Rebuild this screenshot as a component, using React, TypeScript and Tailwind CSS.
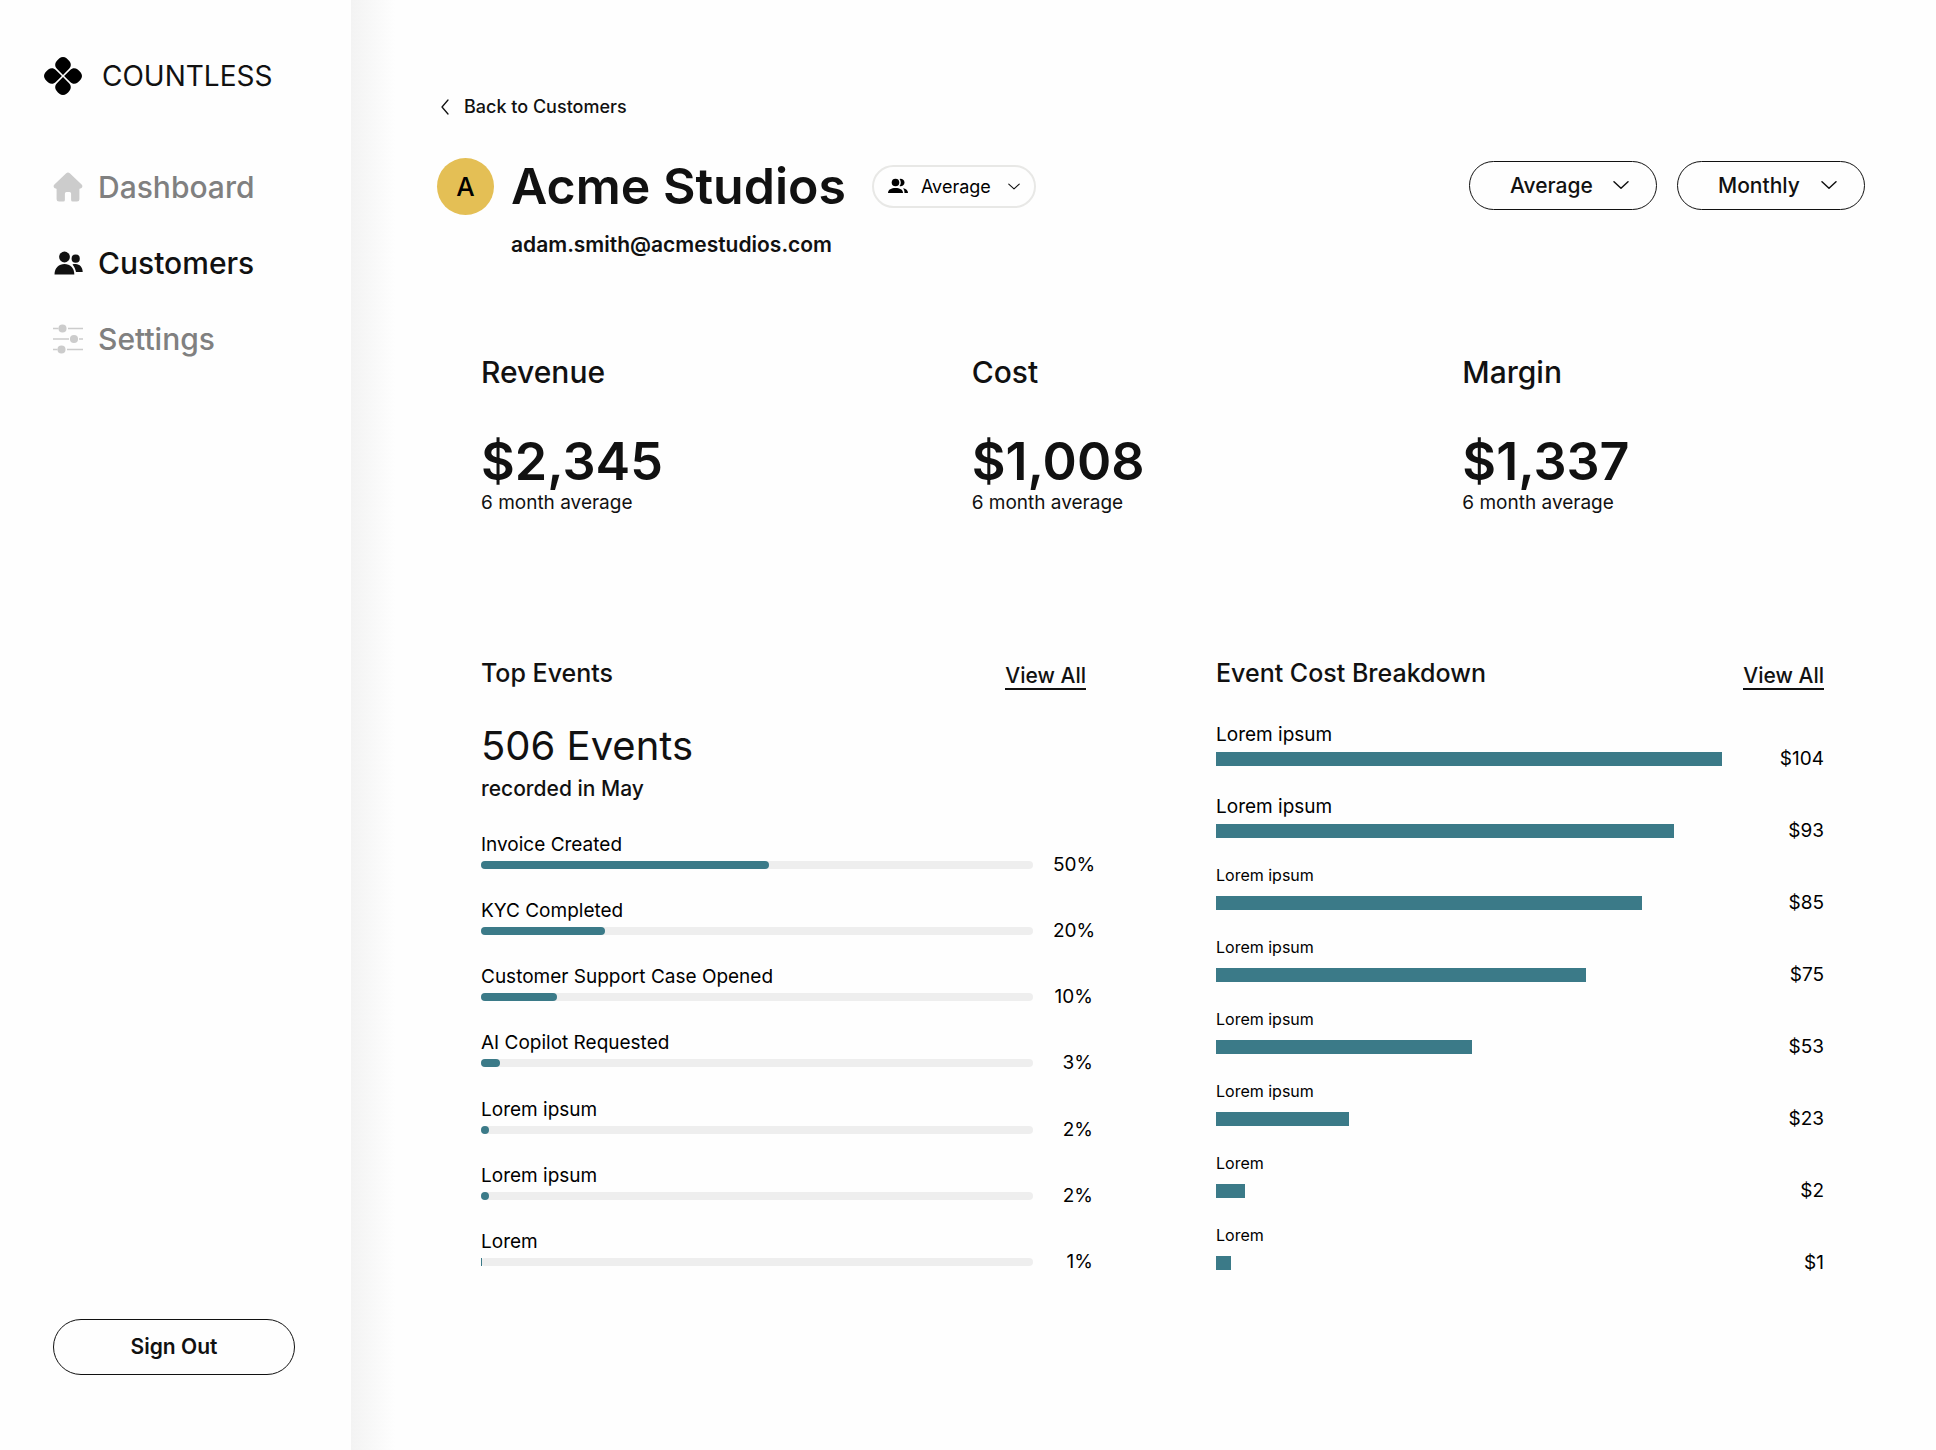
const topEvents = [
  { label: "Invoice Created", percent: 50, fill: 288 },
  { label: "KYC Completed", percent: 20, fill: 124 },
  { label: "Customer Support Case Opened", percent: 10, fill: 76 },
  { label: "AI Copilot Requested", percent: 3, fill: 19 },
  { label: "Lorem ipsum", percent: 2, fill: 8 },
  { label: "Lorem ipsum", percent: 2, fill: 8 },
  { label: "Lorem", percent: 1, fill: 1 },
];
const TRACK = 552;

const costs = [
  { label: "Lorem ipsum", cost: 104, share: 100, large: true },
  { label: "Lorem ipsum", cost: 93, share: 90.6, large: true },
  { label: "Lorem ipsum", cost: 85, share: 84.2, large: false },
  { label: "Lorem ipsum", cost: 75, share: 73.2, large: false },
  { label: "Lorem ipsum", cost: 53, share: 50.6, large: false },
  { label: "Lorem ipsum", cost: 23, share: 26.3, large: false },
  { label: "Lorem", cost: 2, share: 5.7, large: false },
  { label: "Lorem", cost: 1, share: 3, large: false },
];

const stats = [
  { name: "Revenue", value: "$2,345" },
  { name: "Cost", value: "$1,008" },
  { name: "Margin", value: "$1,337" },
];

function Logo() {
  return (
    <svg className="size-[38px]" viewBox="0 0 38 38" fill="#000" aria-hidden="true">
      {[0, 90, 180, 270].map((turn) => (
        <path
          key={turn}
          transform={`rotate(${turn} 19 19)`}
          d="M19 17.900 12.900 11.800C10.600 9.500 10.700 6.600 12.500 4.300 14.300 2 16.400 0 19 0s4.700 2 6.500 4.300C27.300 6.600 27.400 9.500 25.100 11.800z"
        />
      ))}
    </svg>
  );
}

function HomeIcon() {
  return (
    <svg className="size-[30px]" viewBox="0 0 30 30" fill="#cccccc" aria-hidden="true">
      <path d="M13.200 1.300a2.600 2.600 0 0 1 3.600 0L28.600 12.600c1.500 1.500.7 3.700-1.400 3.900-.5 0-.8.300-.8.800V27a2.500 2.500 0 0 1-2.500 2.500h-4.200a1.600 1.600 0 0 1-1.600-1.600v-6.300a1.600 1.600 0 0 0-1.600-1.600h-3a1.600 1.600 0 0 0-1.600 1.600v6.300a1.600 1.600 0 0 1-1.600 1.600H6.100A2.500 2.500 0 0 1 3.600 27v-9.700c0-.5-.3-.8-.8-.8-2.100-.2-2.900-2.400-1.400-3.900z" />
    </svg>
  );
}

function PeopleIcon() {
  return (
    <svg className="size-[30px]" viewBox="0 0 30 30" fill="#111" aria-hidden="true">
      <circle cx="11.500" cy="9" r="5.400" />
      <circle cx="22.700" cy="10.700" r="4.100" />
      <path d="M1.500 26.500C1.500 20 6 16 11.500 16s9.800 4 9.800 10.500z" />
      <path d="M19.500 16.400c1-.4 2.100-.5 3.200-.4 4 .2 7 3.200 7 8h-6.700c-.6-3-1.700-5.500-3.500-7.600z" />
    </svg>
  );
}

function SettingsIcon() {
  return (
    <svg className="size-[30px]" viewBox="0 0 30 30" fill="#cccccc" stroke="#cccccc" strokeWidth="1.500" aria-hidden="true">
      <path d="M0 4.500h5.500M15 4.500h15M0 15h16M26 15h4M0 25.500h4.500M14 25.500h16" />
      <circle cx="9.500" cy="4.500" r="3.300" />
      <circle cx="21" cy="15" r="3.300" />
      <circle cx="8.500" cy="25.500" r="3.300" />
    </svg>
  );
}

function GroupIcon() {
  return (
    <svg className="h-4 w-5" viewBox="0 0 20 16" fill="#000" aria-hidden="true">
      <circle cx="7.500" cy="4.500" r="3.800" />
      <path d="M0 15c0-3.600 3.500-5 7.500-5s7.500 1.400 7.500 5z" />
      <path d="M11.500.9a3.800 3.800 0 1 1 0 7.200c1.700-2 1.700-5.200 0-7.200z" />
      <path d="M15 10.300c3 .5 5 2 5 4.700h-3.500c0-2-.4-3.400-1.500-4.700z" />
    </svg>
  );
}

function Chevron({ className }: { className: string }) {
  return (
    <svg className={className} viewBox="0 0 16 8" fill="none" stroke="#111" strokeLinecap="round" strokeLinejoin="round" strokeWidth="1.500" aria-hidden="true">
      <path d="M1 .8 8 7.200 15 .8" />
    </svg>
  );
}

function PillSelect({ label, options }: { label: string; options: string[] }) {
  return (
    <div className="relative h-[49px] w-[188px]">
      <select aria-label={label} className="h-full w-full appearance-none rounded-full border border-[#111] bg-transparent pl-10 text-[21px] font-medium">
        {options.map((o) => (
          <option key={o}>{o}</option>
        ))}
      </select>
      <Chevron className="pointer-events-none absolute top-5 right-7 h-2 w-4" />
    </div>
  );
}

export default function App() {
  return (
    <div className="flex min-h-screen bg-[#fefefe] font-['Inter',sans-serif] text-[#111]">
      <aside className="flex w-[351px] shrink-0 flex-col px-11 pt-[57px] pb-[75px]">
        <a href="#home" className="flex items-center gap-5 text-[28px] leading-[38px]">
          <Logo />
          COUNTLESS
        </a>
        <nav className="mt-[72px] flex flex-col gap-9 pl-[9px] text-[30px] leading-10 font-medium text-[#808080]">
          <a href="#dashboard" className="flex items-center gap-[15px]">
            <HomeIcon />
            Dashboard
          </a>
          <a href="#customers" aria-current="page" className="flex items-center gap-[15px] text-[#111]">
            <PeopleIcon />
            Customers
          </a>
          <a href="#settings" className="flex items-center gap-[15px]">
            <SettingsIcon />
            Settings
          </a>
        </nav>
        <button type="button" className="mt-auto ml-[9px] h-14 w-[242px] rounded-full border border-[#111] text-[21px] font-semibold">
          Sign Out
        </button>
      </aside>
      <div className="w-11 shrink-0 bg-linear-to-r from-[#f3f3f3] to-[#fefefe]" aria-hidden="true" />

      <main className="min-w-0 flex-1 pt-[95px] pr-[71px] pb-20 pl-[42px]">
        <a href="#customers" className="inline-flex items-center gap-[15px] pl-1 text-[18px] leading-6 font-medium">
          <svg className="h-4 w-2" viewBox="0 0 8 16" fill="none" stroke="#111" strokeLinecap="round" strokeLinejoin="round" strokeWidth="1.300" aria-hidden="true">
            <path d="M7 1 1 8l6 7" />
          </svg>
          Back to Customers
        </a>

        <header className="mt-[34px] flex items-start justify-between">
          <div className="flex gap-[17px]">
            <div className="mt-[3px] flex size-[57px] items-center justify-center rounded-full bg-[#e4bf55] text-[26px] font-medium text-black">A</div>
            <div>
              <div className="flex items-center gap-[26px]">
                <h1 className="text-[50px] leading-[62px] font-semibold">Acme Studios</h1>
                <div className="relative h-[43px] w-[164px] text-black">
                  <select aria-label="Customer group" className="h-full w-full appearance-none rounded-full border-2 border-[#e8e8e6] bg-transparent pl-[47px] text-[18px]">
                    <option>Average</option>
                    <option>Total</option>
                  </select>
                  <span className="pointer-events-none absolute top-[13px] left-4">
                    <GroupIcon />
                  </span>
                  <Chevron className="pointer-events-none absolute top-[18px] right-4 h-[7px] w-3" />
                </div>
              </div>
              <p className="mt-[14px] text-[21px] leading-7 font-semibold">adam.smith@acmestudios.com</p>
            </div>
          </div>
          <div className="mt-[6px] flex gap-5">
            <PillSelect label="Aggregation" options={["Average", "Total"]} />
            <PillSelect label="Period" options={["Monthly", "Weekly"]} />
          </div>
        </header>

        <section className="mt-[93px] grid grid-cols-3 gap-[88px] pl-11">
          {stats.map((s) => (
            <div key={s.name}>
              <h2 className="text-[30px] leading-10 font-medium">{s.name}</h2>
              <p className="mt-10 text-[52px] leading-[60px] font-semibold">{s.value}</p>
              <p className="text-[19px] leading-[22px]">6 month average</p>
            </div>
          ))}
        </section>

        <div className="mt-[142px] grid grid-cols-[612fr_608fr] gap-[123px] pr-[41px] pl-11">
          <section className="flex flex-col">
            <div className="flex items-start justify-between pr-[7px]">
              <h2 className="text-[25px] leading-[34px] font-medium">Top Events</h2>
              <a href="#events" className="mt-2 border-b-2 border-[#111] text-[21px] leading-6 font-medium">View All</a>
            </div>
            <p className="mt-[29px] text-[40px] leading-[53px]">506 Events</p>
            <p className="mt-[3px] text-[21px] leading-7 font-medium">recorded in May</p>
            <ul className="mt-[30px] flex flex-1 flex-col justify-between text-black">
              {topEvents.map((e, i) => (
                <li key={i}>
                  <p className="text-[19px] leading-6">{e.label}</p>
                  <div className="flex h-4 items-center gap-5">
                    <div className="h-2 flex-1 rounded-full bg-[#eeeeee]">
                      <div className={e.fill > 4 ? "h-full rounded-full bg-[#3b7a88]" : "h-full bg-[#3b7a88]"} style={{ width: `${(e.fill / TRACK) * 100}%` }} />
                    </div>
                    <span className="w-10 text-right text-[19px] leading-4">{e.percent}%</span>
                  </div>
                </li>
              ))}
            </ul>
          </section>

          <section>
            <div className="flex items-start justify-between">
              <h2 className="text-[25px] leading-[34px] font-medium">Event Cost Breakdown</h2>
              <a href="#costs" className="mt-2 border-b-2 border-[#111] text-[21px] leading-6 font-medium">View All</a>
            </div>
            <ul className="mt-[30px] flex flex-col gap-[26px] text-black">
              {costs.map((c, i) => (
                <li key={i}>
                  <p className={c.large ? "h-8 text-[19px] leading-[30px]" : "h-8 text-[16px] leading-[22px]"}>{c.label}</p>
                  <div className="flex h-[14px] items-center">
                    <div className="h-full flex-1">
                      <div className="h-full bg-[#3b7a88]" style={{ width: `${c.share}%` }} />
                    </div>
                    <span className="w-[102px] text-right text-[19px] leading-4">${c.cost}</span>
                  </div>
                </li>
              ))}
            </ul>
          </section>
        </div>
      </main>
    </div>
  );
}
